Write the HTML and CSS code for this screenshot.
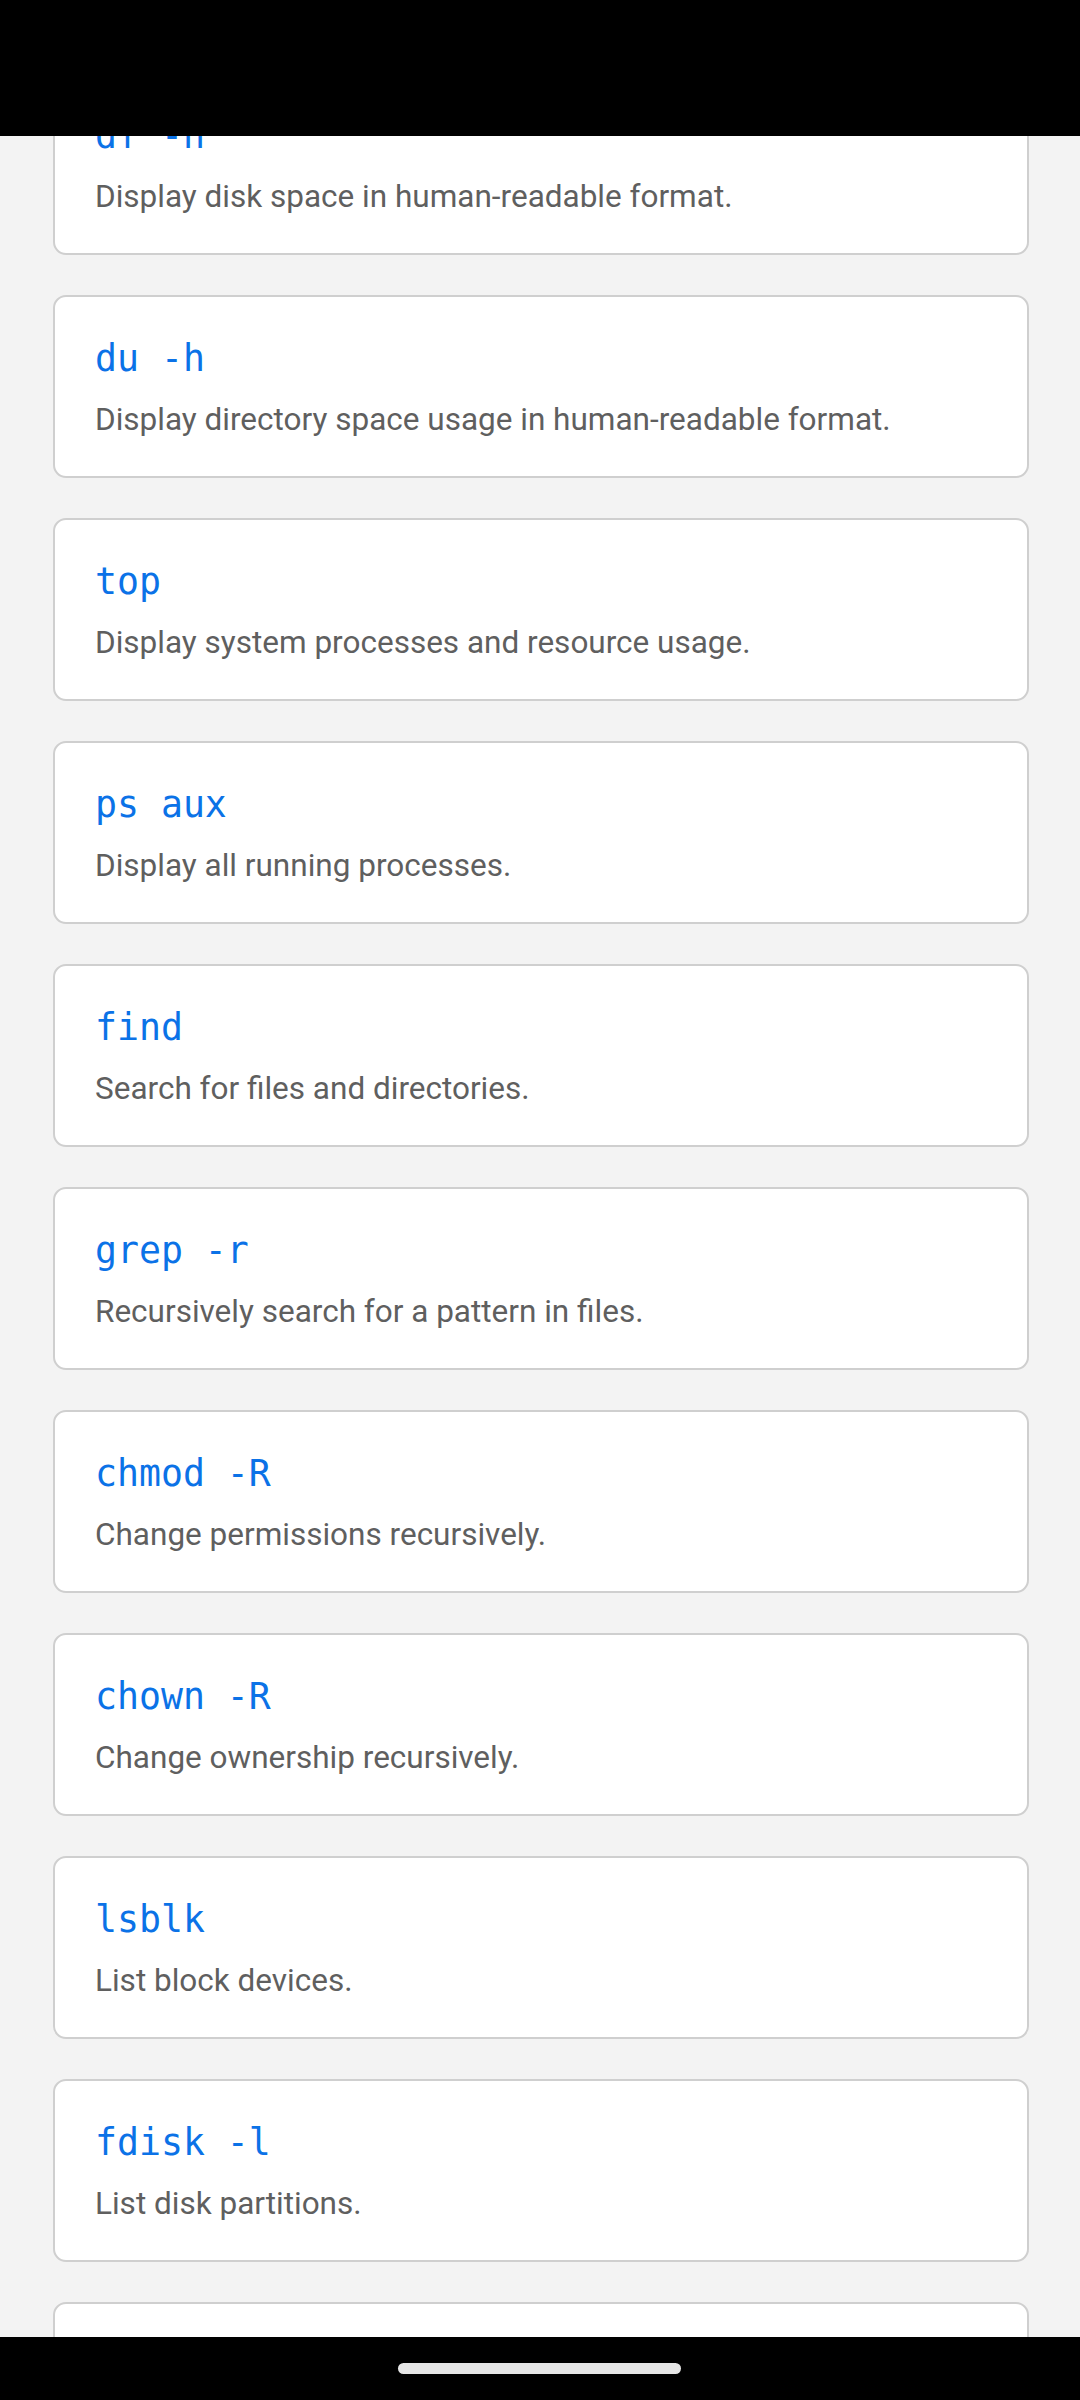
FILE: index.html
```html
<!DOCTYPE html>
<html lang="en">
<head>
<meta charset="utf-8">
<title>Linux Commands</title>
<link rel="stylesheet" href="styles.css">
</head>
<body>
<div class="status-bar"></div>
<main class="list">
  <section class="card"><div class="cmd">df -h</div><div class="desc">Display disk space in human-readable format.</div></section>
  <section class="card"><div class="cmd">du -h</div><div class="desc">Display directory space usage in human-readable format.</div></section>
  <section class="card"><div class="cmd">top</div><div class="desc">Display system processes and resource usage.</div></section>
  <section class="card"><div class="cmd">ps aux</div><div class="desc">Display all running processes.</div></section>
  <section class="card"><div class="cmd">find</div><div class="desc">Search for files and directories.</div></section>
  <section class="card"><div class="cmd">grep -r</div><div class="desc">Recursively search for a pattern in files.</div></section>
  <section class="card"><div class="cmd">chmod -R</div><div class="desc">Change permissions recursively.</div></section>
  <section class="card"><div class="cmd">chown -R</div><div class="desc">Change ownership recursively.</div></section>
  <section class="card"><div class="cmd">lsblk</div><div class="desc">List block devices.</div></section>
  <section class="card"><div class="cmd">fdisk -l</div><div class="desc">List disk partitions.</div></section>
  <section class="card"></section>
</main>
<div class="nav-bar"><div class="pill"></div></div>
</body>
</html>
```
FILE: styles.css
```css
html, body {
  margin: 0;
  padding: 0;
}
body {
  background: #f3f3f3;
  width: 1080px;
  height: 2400px;
  overflow: hidden;
  position: relative;
  font-family: Roboto, "Liberation Sans", sans-serif;
}
.status-bar {
  position: absolute;
  left: 0;
  top: 0;
  width: 1080px;
  height: 136px;
  background: #000;
  z-index: 5;
}
.list {
  display: flex;
  flex-direction: column;
  gap: 40px;
  padding: 72px 51px 0 53px;
}
.card {
  box-sizing: border-box;
  height: 183px;
  background: #fff;
  border: 2px solid #cfcfcf;
  border-radius: 13px;
  padding: 38px 40px 0 40px;
}
.cmd {
  font-family: "DejaVu Sans Mono", "Liberation Mono", monospace;
  font-size: 36.5px;
  line-height: 48px;
  color: #0b72e7;
  white-space: pre;
}
.desc {
  margin-top: 15px;
  font-size: 31.5px;
  line-height: 44px;
  color: #5f5f5f;
}
.nav-bar {
  position: absolute;
  left: 0;
  top: 2337px;
  width: 1080px;
  height: 63px;
  background: #000;
  z-index: 5;
}
.pill {
  position: absolute;
  left: 398px;
  top: 26px;
  width: 283px;
  height: 11px;
  border-radius: 6px;
  background: #e6e6e6;
}
```
